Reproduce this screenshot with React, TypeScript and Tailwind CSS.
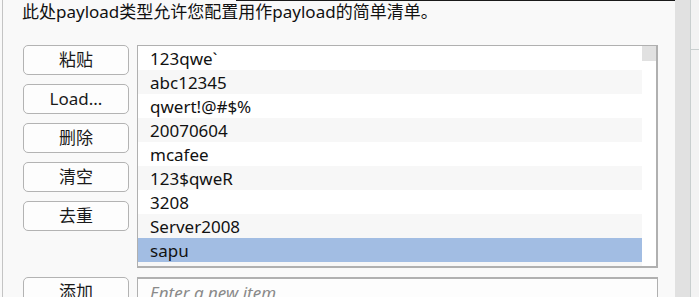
import React from 'react';

const items = ['123qwe`', 'abc12345', 'qwert!@#$%', '20070604', 'mcafee', '123$qweR', '3208', 'Server2008', 'sapu', ''];
const buttons = ['粘贴', 'Load...', '删除', '清空', '去重'];
const selected = 8;

const font = { fontFamily: '"Noto Sans", "Noto Sans CJK SC", sans-serif' };

const Btn = ({ label }: { label: string }) => (
    <div className="h-[30px] w-[106px] shrink-0 flex items-center justify-center rounded-[5px] border border-[#b3b3b3] bg-[#fdfdfd] text-[17px] text-[#1a1a1a]">
        {label}
    </div>
);

export default function App() {
    return (
        <div className="relative w-[699px] h-[297px] flex overflow-hidden bg-[#f9f9f9]" style={font}>
            <div className="absolute top-0 left-[236px] w-[439px] h-[1px] bg-[#1a1a1a]"></div>

            <div className="w-[675px] h-full pl-[2px] flex">
                <div className="w-[1px] h-full bg-[#c4c4c4]"></div>
                <div className="flex-1 flex flex-col">
                    <div className="h-[45px] shrink-0 pl-[19px] pt-[1px] text-[17px] leading-[22px] text-[#111]">
                        此处payload类型允许您配置用作payload的简单清单。
                    </div>

                    <div className="flex shrink-0 gap-[8px] pl-[20px]">
                        <div className="flex flex-col gap-[9px]">
                            {buttons.map((b) => <Btn key={b} label={b} />)}
                        </div>
                        <div className="w-[521px] h-[223px] flex border border-[#b0b0b0] border-r-2 border-b-2 bg-white overflow-hidden">
                            <div className="w-[505px] flex flex-col">
                                {items.map((it, i) => (
                                    <div
                                        key={i}
                                        className={`h-[24px] shrink-0 flex items-center pl-[12px] pt-[2px] text-[17px] text-[#111] ${i === selected ? 'bg-[#a2bde3]' : i % 2 === 1 ? 'bg-[#f7f7f7]' : 'bg-white'}`}
                                    >
                                        {it}
                                    </div>
                                ))}
                            </div>
                            <div className="w-[14px] flex flex-col">
                                <div className="h-[15px] bg-[#e1e1e1]"></div>
                            </div>
                        </div>
                    </div>

                    <div className="flex shrink-0 gap-[8px] pl-[20px] mt-[9px]">
                        <Btn label="添加" />
                        <div className="w-[521px] h-[30px] flex items-center pl-[12px] border border-[#b0b0b0] border-t-2 bg-[#fdfdfd] text-[17px] italic text-[#8a8a8a]">
                            Enter a new item
                        </div>
                    </div>
                </div>
            </div>

            <div className="w-[15px] h-full bg-[#e1e1e1]"></div>
            <div className="w-[1px] h-full bg-[#c9cfcf]"></div>
            <div className="flex-1 h-full bg-[#f3f3f3] flex flex-col">
                <div className="h-[49px]"></div>
                <div className="h-[1px] bg-[#c9cfcf]"></div>
            </div>
        </div>
    );
}
